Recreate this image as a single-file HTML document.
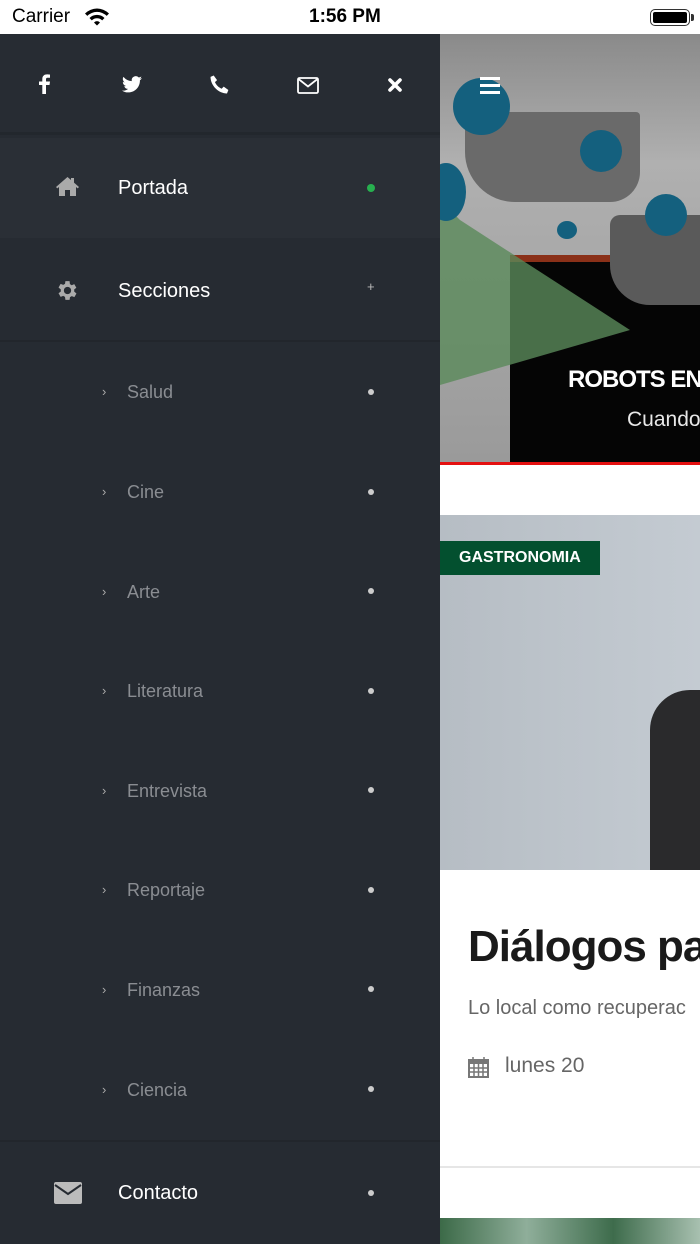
<!DOCTYPE html>
<html><head><meta charset="utf-8"><style>
*{margin:0;padding:0;box-sizing:border-box}
body{width:700px;height:1244px;overflow:hidden;position:relative;font-family:"Liberation Sans",Roboto,sans-serif;background:#fff}
.abs{position:absolute}
.status{left:0;top:0;width:700px;height:34px;background:#fff;font-size:19px;color:#000}
.drawer{left:0;top:34px;width:440px;height:1210px;background:#262b32}
.row{position:absolute;left:0;width:440px}
.dot{position:absolute;left:368px;width:6px;height:6px;border-radius:50%;background:#ccc}
.sub{position:absolute;left:127px;font-size:18px;color:#8a8d92}
.chev{position:absolute;left:102px;font-size:13px;color:#aaa}
.main{color:#fff;font-size:20px;position:absolute;left:118px}
</style></head><body>
<div class="abs status">
<span class="abs" style="left:12px;top:6px">Carrier</span>
<svg class="abs" style="left:84px;top:7px" width="26" height="19" viewBox="0 0 26 19"><path d="M1 6.5a17 17 0 0 1 24 0l-2.3 2.4a13.8 13.8 0 0 0-19.4 0z M5.5 11a10.5 10.5 0 0 1 15 0l-2.3 2.4a7.3 7.3 0 0 0-10.4 0z M10 15.5a4 4 0 0 1 6 0L13 18.5z" fill="#000"/></svg>
<span class="abs" style="left:309px;top:6px;font-weight:bold">1:56 PM</span>
<div class="abs" style="left:650px;top:9px;width:40px;height:17px;border:1.5px solid #333;border-radius:5px;padding:2px"><div style="width:100%;height:100%;background:#000;border-radius:2px"></div></div>
<div class="abs" style="left:691px;top:14px;width:3px;height:7px;background:#333;border-radius:0 2px 2px 0"></div>
</div>

<!-- right content -->
<div class="abs" style="left:440px;top:34px;width:260px;height:428px;background:linear-gradient(#8a8a8a,#b0b0b0 30%,#9a9a9a)"></div>
<div class="abs" style="left:510px;top:258px;width:190px;height:204px;background:#050505"></div>
<div class="abs" style="left:510px;top:255px;width:100px;height:7px;background:#8a3018"></div>
<div class="abs" style="left:465px;top:112px;width:175px;height:90px;background:#6a6a6a;border-radius:4px 4px 30px 50px"></div>
<div class="abs" style="left:610px;top:215px;width:90px;height:90px;background:#5a5a5a;border-radius:10px 0 0 40px"></div>
<svg class="abs" style="left:440px;top:200px" width="200" height="190"><polygon points="0,0 20,20 190,130 0,185" fill="#5a8a5a" opacity=".8"/></svg>
<div class="abs" style="left:453px;top:78px;width:57px;height:57px;border-radius:50%;background:#14607e"></div>
<div class="abs" style="left:580px;top:130px;width:42px;height:42px;border-radius:50%;background:#14607e"></div>
<div class="abs" style="left:645px;top:194px;width:42px;height:42px;border-radius:50%;background:#14607e"></div>
<div class="abs" style="left:426px;top:163px;width:40px;height:58px;border-radius:50%;background:#14607e"></div>
<div class="abs" style="left:557px;top:221px;width:20px;height:18px;border-radius:50%;background:#14607e"></div>
<div class="abs" style="left:480px;top:77px;width:20px;height:3px;background:#fff;box-shadow:0 7px 0 #fff,0 14px 0 #fff"></div>
<div class="abs" style="left:568px;top:366px;color:#fff;font-weight:bold;font-size:24px;letter-spacing:-1px;white-space:nowrap">ROBOTS EN</div>
<div class="abs" style="left:627px;top:408px;color:#e8e8e8;font-size:21px;white-space:nowrap">Cuando</div>
<div class="abs" style="left:440px;top:462px;width:260px;height:3px;background:#e41010"></div>
<div class="abs" style="left:440px;top:515px;width:260px;height:355px;background:linear-gradient(90deg,#b6bdc4,#c4cbd2)"></div>
<div class="abs" style="left:650px;top:690px;width:60px;height:180px;background:#2a2a2c;border-radius:40px 0 0 0"></div>
<div class="abs" style="left:440px;top:541px;width:160px;height:34px;background:#03502f;color:#fff;font-weight:bold;font-size:16px;line-height:34px;padding-left:19px">GASTRONOMIA</div>
<div class="abs" style="left:468px;top:922px;font-size:44px;font-weight:bold;color:#1a1a1a;white-space:nowrap;letter-spacing:-1px">Diálogos pa</div>
<div class="abs" style="left:468px;top:997px;font-size:20px;color:#666;white-space:nowrap">Lo local como recuperac</div>
<svg class="abs" style="left:468px;top:1056px" width="21" height="22" viewBox="0 0 21 22"><rect x="1" y="4" width="19" height="17" fill="none" stroke="#777" stroke-width="2"/><rect x="1" y="4" width="19" height="4" fill="#777"/><path d="M5 1v5M16 1v5M1 12h19M1 16h19M6 8v13M10.5 8v13M15 8v13" stroke="#777" stroke-width="1.5"/></svg>
<div class="abs" style="left:505px;top:1054px;font-size:21px;color:#666">lunes 20</div>
<div class="abs" style="left:440px;top:1166px;width:260px;height:2px;background:#e6e6e6"></div>
<div class="abs" style="left:440px;top:1218px;width:260px;height:26px;background:linear-gradient(90deg,#3c6a48,#8fae9a,#3e6c4c,#a8c0b0)"></div>

<!-- drawer -->
<div class="abs drawer">
<div class="row" style="top:0;height:101px;background:#272c33;border-bottom:3px solid #22272d"></div>
<svg class="abs" style="left:37px;top:40px" width="14" height="20" viewBox="0 0 14 20"><path d="M9 20V11h3.5l.5-3.5H9V5.5c0-1 .3-1.7 1.8-1.7H13V.6C12.6.5 11.4.4 10 .4 7.2.4 5.3 2 5.3 5.1v2.4H2V11h3.3v9z" fill="#fff"/></svg>
<svg class="abs" style="left:122px;top:42px" width="20" height="17" viewBox="0 0 24 20"><path d="M24 2.4a10 10 0 0 1-2.8.8A5 5 0 0 0 23.3.4a10 10 0 0 1-3.1 1.2A4.9 4.9 0 0 0 11.8 6 14 14 0 0 1 1.7.9a4.9 4.9 0 0 0 1.5 6.6 5 5 0 0 1-2.2-.6v.1a4.9 4.9 0 0 0 3.9 4.8 5 5 0 0 1-2.2.1 4.9 4.9 0 0 0 4.6 3.4A9.9 9.9 0 0 1 0 17.3 14 14 0 0 0 7.5 19.5c9 0 14-7.5 14-14v-.6A10 10 0 0 0 24 2.4z" fill="#fff"/></svg>
<svg class="abs" style="left:210px;top:41px" width="19" height="19" viewBox="0 0 18 18"><path d="M3.5 0.5l3.2 4.3-2 2c1.1 2.7 3.5 5.1 6.3 6.2l2-2 4.4 3.2-1.3 3.3C8 17.5 0.5 10 0.5 1.8z" fill="#fff"/></svg>
<svg class="abs" style="left:297px;top:43px" width="22" height="17" viewBox="0 0 22 17"><rect x="1" y="1" width="20" height="15" rx="1.5" fill="none" stroke="#fff" stroke-width="1.8"/><path d="M1.5 2l9.5 7.5L20.5 2" fill="none" stroke="#fff" stroke-width="1.8"/></svg>
<svg class="abs" style="left:388px;top:44px" width="14" height="14" viewBox="0 0 14 14"><path d="M2 2l10 10M12 2L2 12" stroke="#fff" stroke-width="3.6" stroke-linecap="round"/></svg>

<div class="row" style="top:104px;height:100px;background:#2a2f36"></div>
<svg class="abs" style="left:55px;top:142px" width="25" height="20" viewBox="0 0 25 20"><path d="M12.5 1L1 11l1.3 1.4L4 11v9h6v-6h5v6h6v-9l1.7 1.4L24 11 19 6.6V2h-3v2z" fill="#aaa"/></svg>
<div class="main" style="top:143px">Portada</div>
<div class="dot" style="top:150px;background:#27b04f;width:8px;height:8px;left:367px"></div>

<div class="row" style="top:306px;height:2px;background:#22262c"></div>
<svg class="abs" style="left:55px;top:244px" width="25" height="25" viewBox="0 0 24 24"><path fill="#aaa" d="M19.4 13a7.6 7.6 0 0 0 0-2l2.1-1.6-2-3.5-2.5 1a7.5 7.5 0 0 0-1.7-1L15 3h-4l-.4 2.6a7.5 7.5 0 0 0-1.7 1l-2.5-1-2 3.5L6.6 11a7.6 7.6 0 0 0 0 2l-2.2 1.6 2 3.5 2.5-1c.5.4 1.1.7 1.7 1L11 21h4l.4-2.6c.6-.3 1.2-.6 1.7-1l2.5 1 2-3.5zM13 15.5a3.5 3.5 0 1 1 0-7 3.5 3.5 0 0 1 0 7z" transform="translate(-1 0)"/></svg>
<div class="main" style="top:246px">Secciones</div>
<div class="abs" style="left:367px;top:245px;color:#bbb;font-size:13px">+</div>

<div class="chev" style="top:350px">›</div><div class="sub" style="top:348px">Salud</div><div class="dot" style="top:355px"></div>
<div class="chev" style="top:450px">›</div><div class="sub" style="top:448px">Cine</div><div class="dot" style="top:455px"></div>
<div class="chev" style="top:550px">›</div><div class="sub" style="top:548px">Arte</div><div class="dot" style="top:554px"></div>
<div class="chev" style="top:649px">›</div><div class="sub" style="top:647px">Literatura</div><div class="dot" style="top:654px"></div>
<div class="chev" style="top:749px">›</div><div class="sub" style="top:747px">Entrevista</div><div class="dot" style="top:753px"></div>
<div class="chev" style="top:848px">›</div><div class="sub" style="top:846px">Reportaje</div><div class="dot" style="top:853px"></div>
<div class="chev" style="top:948px">›</div><div class="sub" style="top:946px">Finanzas</div><div class="dot" style="top:952px"></div>
<div class="chev" style="top:1048px">›</div><div class="sub" style="top:1046px">Ciencia</div><div class="dot" style="top:1052px"></div>

<div class="row" style="top:1106px;height:2px;background:#22262c"></div>
<svg class="abs" style="left:54px;top:1148px" width="28" height="22" viewBox="0 0 28 22"><rect x="0" y="0" width="28" height="22" rx="2" fill="#bbb"/><path d="M1 3l13 9 13-9" fill="none" stroke="#262b32" stroke-width="2"/></svg>
<div class="main" style="top:1148px">Contacto</div>
<div class="dot" style="top:1156px"></div>
</div>
</body></html>
